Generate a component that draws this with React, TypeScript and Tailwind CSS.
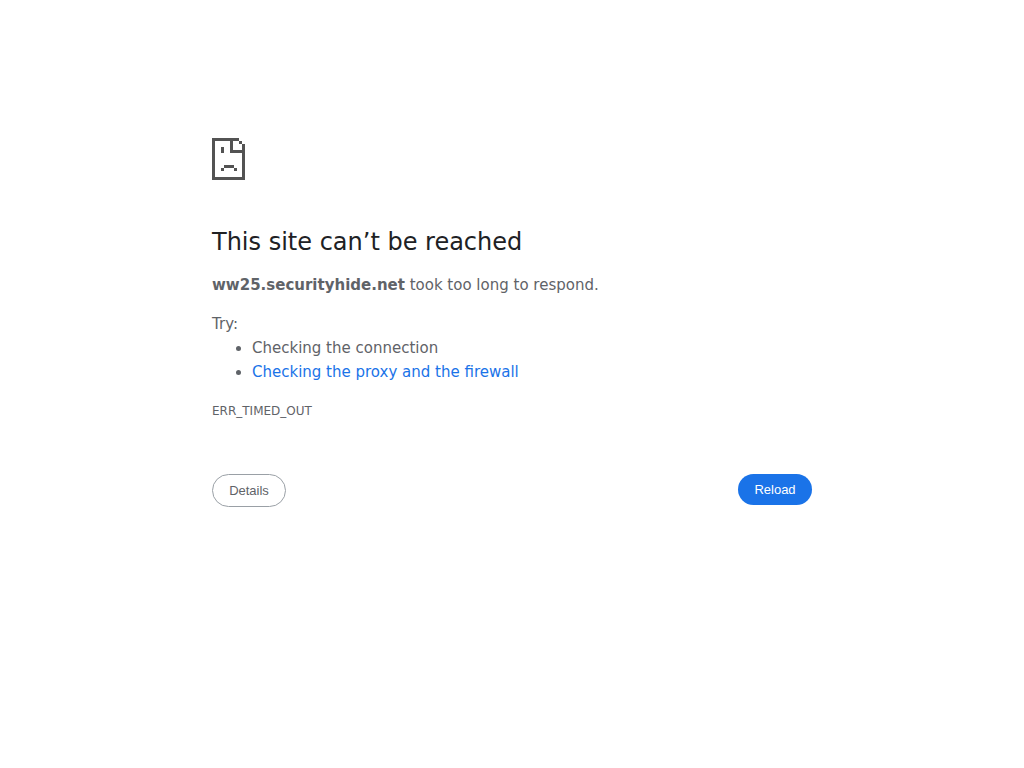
const DARK = '#535353'

// x, y, width, height of each block, in px
const BLOCKS = [
  [0, 0, 27, 3],
  [0, 3, 3, 39],
  [3, 39, 30, 3],
  [30, 6, 3, 33],
  [27, 3, 3, 3],
  [18, 3, 3, 12],
  [21, 12, 9, 3],
  [9, 9, 3, 6],
  [12, 27, 10, 3],
  [9, 30, 3, 3],
  [22, 30, 3, 3],
]

function SadPage() {
  return (
    <svg width="33" height="42" viewBox="0 0 33 42" fill={DARK} shapeRendering="crispEdges" aria-hidden="true">
      {BLOCKS.map(([x, y, w, h]) => (
        <rect key={`${x}-${y}`} x={x} y={y} width={w} height={h} />
      ))}
    </svg>
  )
}

export default function App() {
  return (
    <div className="min-h-screen bg-white font-['DejaVu_Sans',sans-serif] text-[15px] leading-6 text-[#5f6368]">
      <main className="mx-auto w-full max-w-[600px] pt-[138px]">
        <SadPage />
        <h1 className="mt-11 text-2xl leading-9 text-[#202124]">This site can’t be reached</h1>
        <p className="mt-[13px]">
          <strong className="font-bold">ww25.securityhide.net</strong> took too long to respond.
        </p>
        <p className="mt-[15px]">Try:</p>
        <ul className="list-disc pl-10">
          <li>Checking the connection</li>
          <li>
            <a href="#proxy" className="text-[#1a73e8]">Checking the proxy and the firewall</a>
          </li>
        </ul>
        <p className="mt-[15px] text-xs leading-6">ERR_TIMED_OUT</p>
        <div className="mt-[51px] flex items-start justify-between font-['Liberation_Sans',sans-serif] text-[13px] leading-[15px]">
          <button type="button" className="min-w-[74px] rounded-full border border-[#9aa0a6] px-[15px] py-2">
            Details
          </button>
          <button type="button" className="min-w-[74px] rounded-full bg-[#1a73e8] px-4 py-2 text-white">
            Reload
          </button>
        </div>
      </main>
    </div>
  )
}
